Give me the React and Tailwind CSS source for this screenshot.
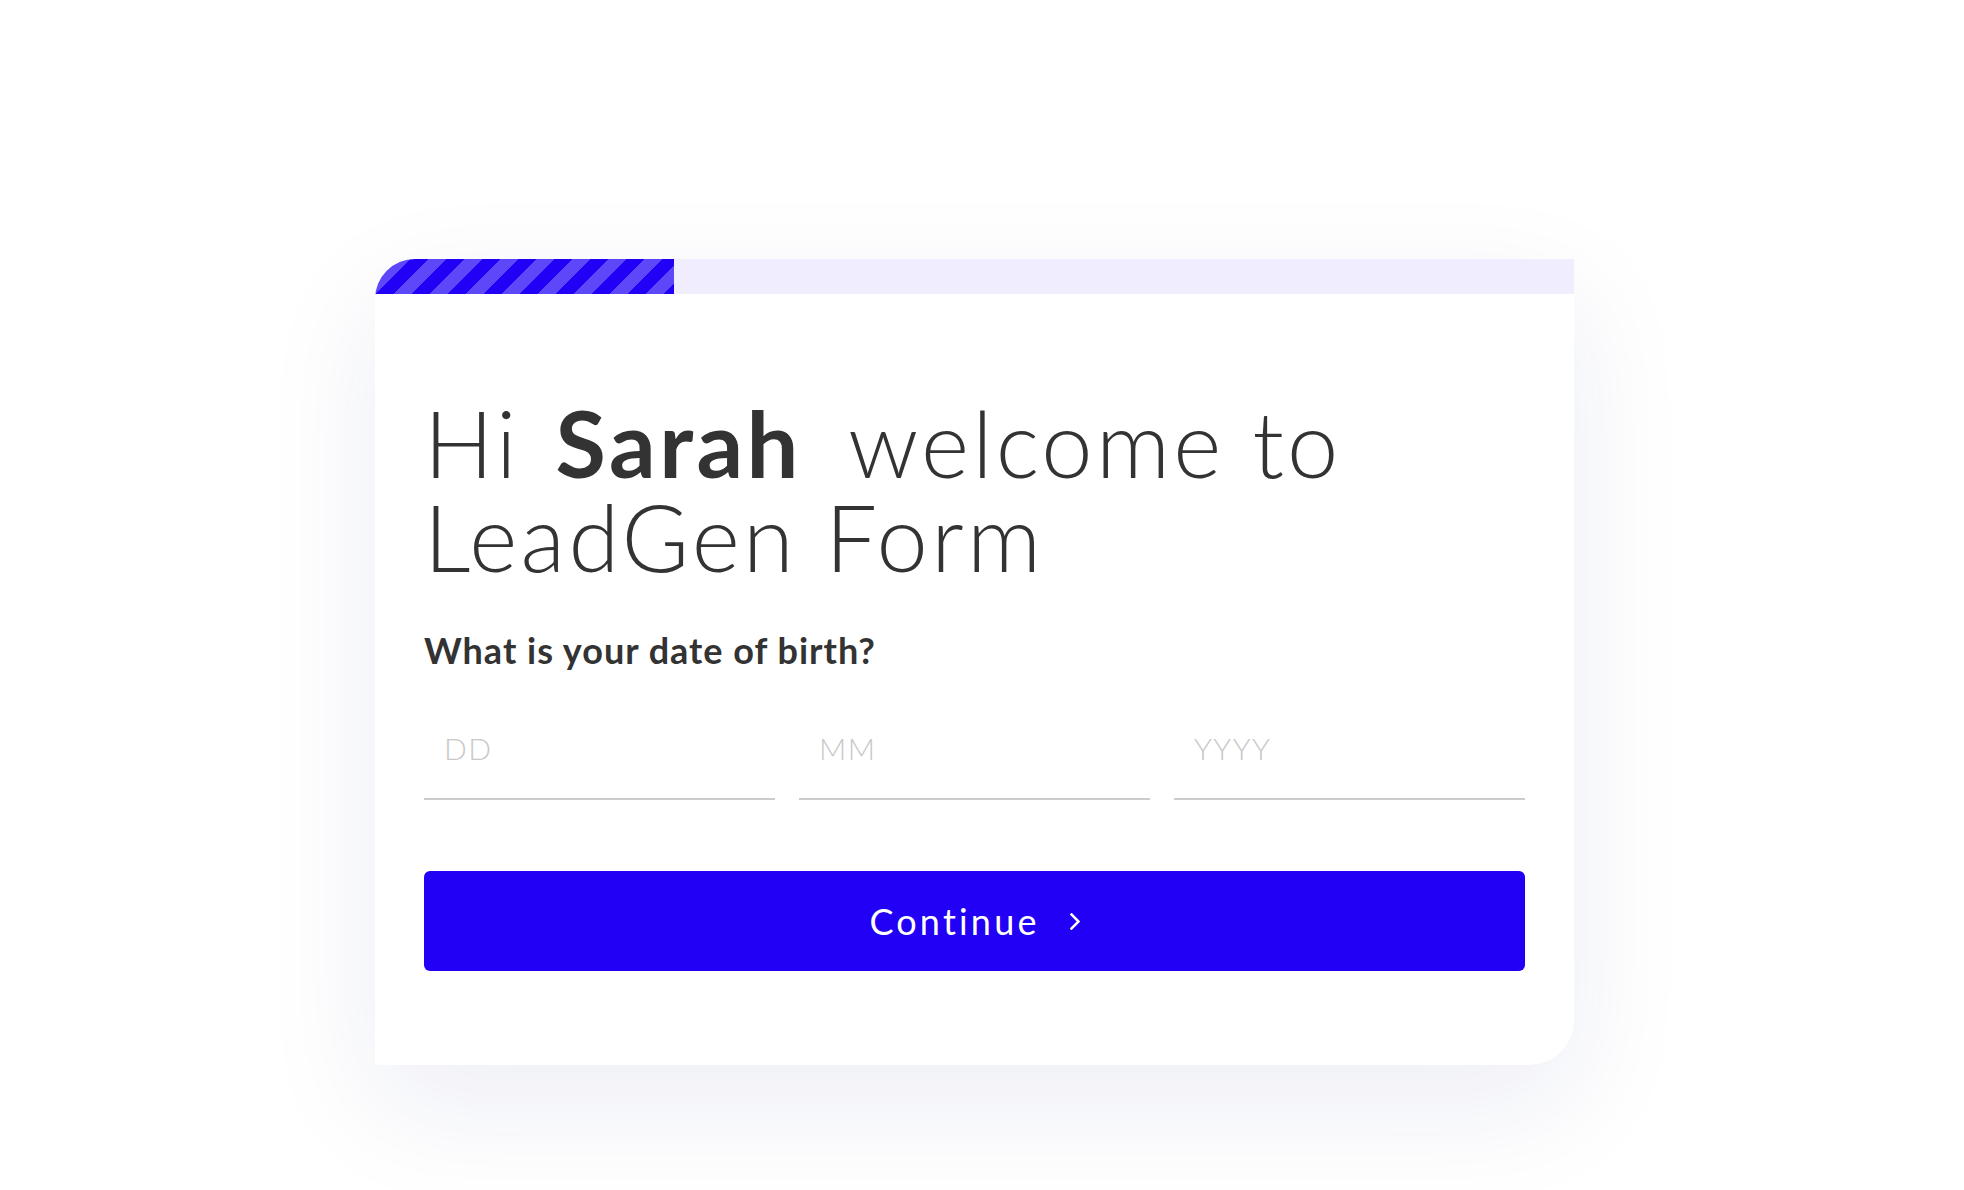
export default function App() {
  return (
    <div className="min-h-[1190px] w-full bg-white pl-[375px] pt-[259px]" style={{ fontFamily: "Lato, 'Noto Sans', sans-serif" }}>
      <div className="w-[1199px] overflow-hidden rounded-tl-[40px] rounded-br-[45px] bg-white shadow-[0_40px_120px_rgba(30,40,130,0.08)]">
        <div className="h-[35px] w-full bg-[#f0edfe]">
          <div className="h-full w-[299px] bg-[repeating-linear-gradient(135deg,#2200f5_0px,#2200f5_12.7px,#5c48f8_12.7px,#5c48f8_25.4px)]" />
        </div>
        <div className="px-[49px] pt-[102px] pb-[94px]">
          <h1 className="text-[92px] font-light leading-[94px] tracking-[3.2px] text-[#333333]">
            Hi<span className="ml-[36px] mr-[46px] font-bold tracking-[3.5px]">Sarah</span>welcome to
            <br />
            <span className="tracking-[3.3px]">LeadGen Form</span>
          </h1>
          <p className="mt-[44px] text-[36px] font-bold leading-[44px] tracking-[1px] text-[#333333]">
            What is your date of birth?
          </p>
          <div className="mt-[26px] grid grid-cols-3 gap-[24px]">
            {["DD", "MM", "YYYY"].map((p) => (
              <input
                key={p}
                placeholder={p}
                className="h-[102px] w-full border-b-2 border-[#cccccc] bg-transparent px-[20px] text-[30px] font-light tracking-[1.5px] text-[#333333] outline-none placeholder:text-[#c8c8c8]"
              />
            ))}
          </div>
          <button className="mt-[71px] flex h-[100px] w-full items-center justify-center gap-[30px] rounded-[6px] bg-[#2200f5] text-white">
            <span className="text-[36px] font-normal leading-none tracking-[3.2px]">Continue</span>
            <svg width="10" height="17" viewBox="0 0 10 17" fill="none">
              <polyline points="1.5,1.5 8.5,8.5 1.5,15.5" stroke="white" strokeWidth="2.5" strokeLinecap="square" />
            </svg>
          </button>
        </div>
      </div>
    </div>
  );
}
